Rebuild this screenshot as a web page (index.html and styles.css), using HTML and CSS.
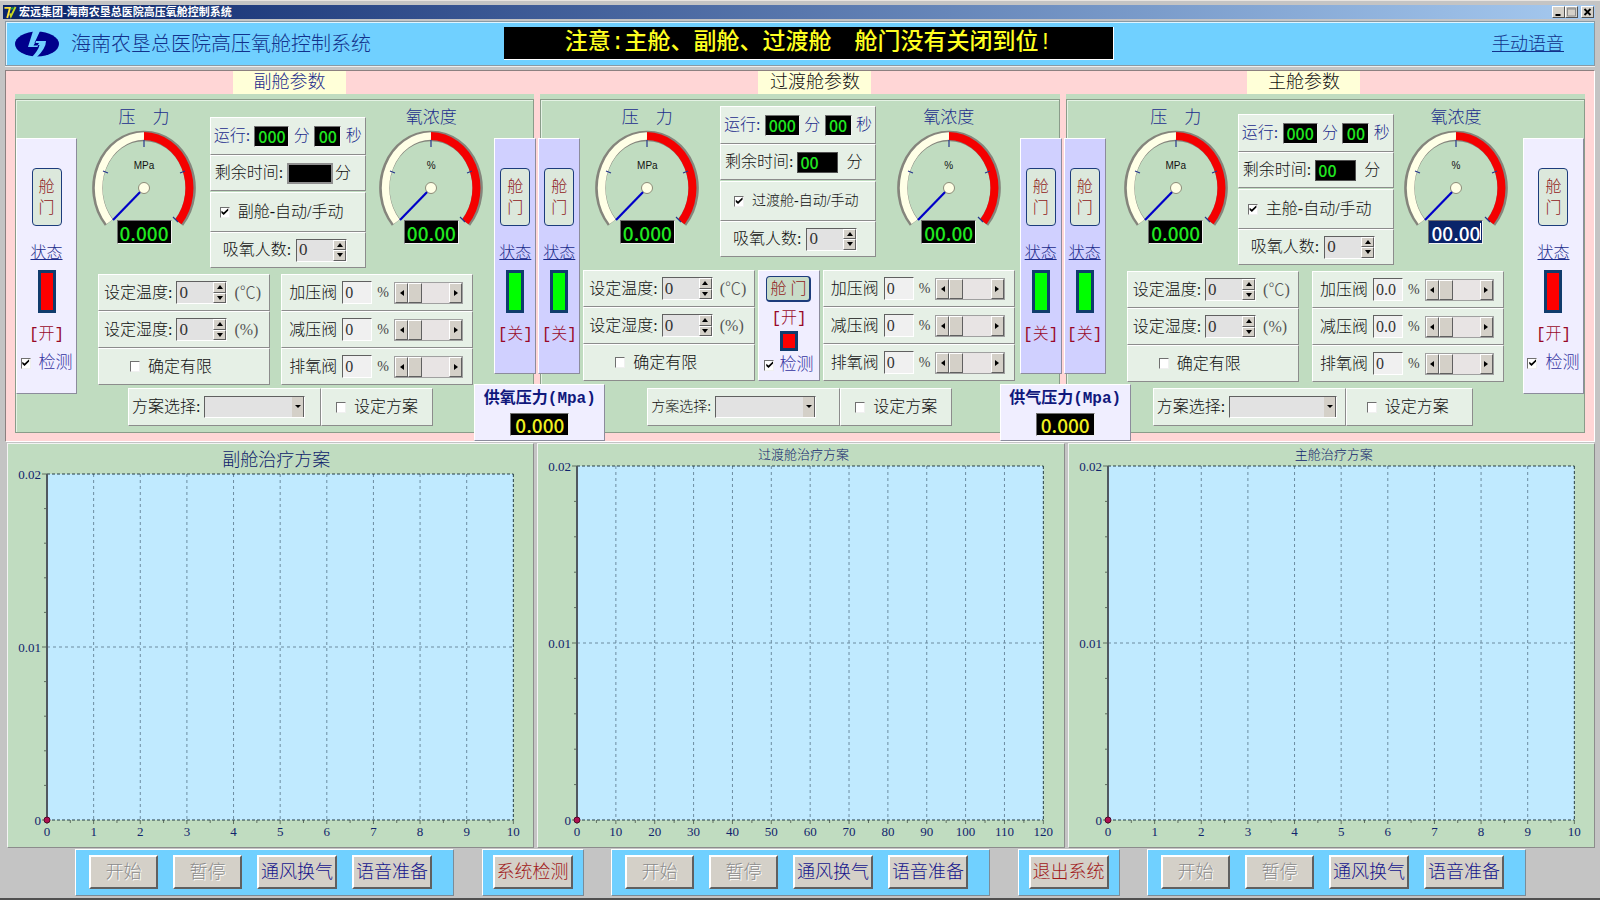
FILE: index.html
```html
<!DOCTYPE html>
<html lang="zh-CN">
<head>
    <meta charset="UTF-8">
    <title>宏远集团-海南农垦总医院高压氧舱控制系统</title>
    <link rel="stylesheet" href="styles.css">
</head>
<body>
    <!-- Shared gauge dial -->
    <svg class="defs" width="0" height="0" aria-hidden="true">
        <symbol id="dial" viewBox="0 0 104 100">
            <path d="M52 7 A46 52 0 0 0 17 93.5" fill="none" stroke="#85857c" stroke-width="10.5"/>
            <path d="M52 7 A46 52 0 0 1 87 93.5" fill="none" stroke="#85857c" stroke-width="10.5"/>
            <path d="M52 7 A46 52 0 0 0 17.6 92.8" fill="none" stroke="#ffffe6" stroke-width="7.5"/>
            <path d="M52 7 A46 52 0 0 1 86.4 92.8" fill="none" stroke="#f40000" stroke-width="8"/>
            <path d="M52 11 V18 M11 42 L16 44 M93 42 L88 44 M81 88 L86 93" stroke="#26368c" stroke-width="1.2"/>
            <path d="M52 59 L21 91" stroke="#0000c8" stroke-width="2.2"/>
            <ellipse cx="52" cy="59" rx="5.5" ry="5.5" fill="#ffffe6" stroke="#8c8c78"/>
        </symbol>
    </svg>

    <div class="titlebar">
        <svg class="app-icon" viewBox="0 0 14 14">
            <path d="M1 2 H7 L4 13" fill="none" stroke="#ffe23a" stroke-width="2"/>
            <path d="M7 8 L8 11 L13 1" fill="none" stroke="#c8d820" stroke-width="2"/>
            <path d="M8 3 L11 2" stroke="#20a040" stroke-width="2"/>
        </svg>
        <span class="titlebar-text">宏远集团-海南农垦总医院高压氧舱控制系统</span>
        <button class="win-btn" aria-label="最小化"><svg viewBox="0 0 10 10"><path d="M2 8 H7" stroke="#000" stroke-width="2"/></svg></button>
        <button class="win-btn" aria-label="最大化"><svg viewBox="0 0 10 10"><path d="M1 2 H9 M1 1 H9 V9 H1 Z" fill="none" stroke="#8c8c8c"/></svg></button>
        <button class="win-btn win-close" aria-label="关闭"><svg viewBox="0 0 10 10"><path d="M2 2 L8 8 M8 2 L2 8" stroke="#000" stroke-width="1.8"/></svg></button>
    </div>

    <header class="header">
        <svg class="logo" viewBox="0 0 44 26">
            <ellipse cx="22" cy="13" rx="22" ry="12.5" fill="#00008c"/>
            <path d="M18 0 H25 L19.500 12 H24 L22.500 16 H13 Z" fill="#70d0ff"/>
            <path d="M21 10 H31 Q31 17 22 26 H17 Q23.500 19 24.500 14 H20 Z" fill="#70d0ff"/>
            <path d="M20 12 H24 L22.500 14.500 H18.500 Z" fill="#00008c"/>
        </svg>
        <h1 class="header-title">海南农垦总医院高压氧舱控制系统</h1>
        <div class="banner">注意:主舱、副舱、过渡舱&emsp;舱门没有关闭到位!</div>
        <a class="voice-link" href="#">手动语音</a>
    </header>

    <section class="params">
        <!-- 副舱 -->
        <div class="chamber chamber-sub">
            <h2 class="tab tab-blue">副舱参数</h2>
            <div class="chamber-body">
                <div class="chamber-inner">
                    <div class="status status-open status-wide">
                        <button class="door-btn">舱<br>门</button>
                        <a class="state-link" href="#">状态</a>
                        <span class="lamp lamp-red"></span>
                        <span class="state-text">[开]</span>
                        <label class="check detect"><input type="checkbox" checked>检测</label>
                    </div>
                    <div class="main">
                        <div class="row-gauges">
                            <div class="gauge">
                                <label class="gauge-title" for="p1">压&emsp;力</label>
                                <div class="dial"><svg><use href="#dial"/></svg><span class="unit">MPa</span></div>
                                <input class="lcd lcd-gauge" id="p1" value="0.000" readonly>
                            </div>
                            <div class="run-box">
                                <div class="cell run-row">
                                    <span>运行:</span><input class="lcd lcd-min" aria-label="运行分" value="000" readonly><span>分</span><input class="lcd lcd-sec" aria-label="运行秒" value="00" readonly><span>秒</span>
                                </div>
                                <div class="cell left-row">
                                    <label for="l1">剩余时间:</label><input class="lcd lcd-left" id="l1" value="" readonly><span>分</span>
                                </div>
                                <div class="cell auto-row"><label class="check"><input type="checkbox" checked>副舱-自动/手动</label></div>
                                <div class="cell people-row">
                                    <label for="n1">吸氧人数:</label>
                                    <span class="spin"><input id="n1" type="text" value="0"><span class="spin-btns"><button class="up" aria-label="增加"></button><button class="down" aria-label="减少"></button></span></span>
                                </div>
                            </div>
                            <div class="gauge">
                                <label class="gauge-title" for="o1">氧浓度</label>
                                <div class="dial"><svg><use href="#dial"/></svg><span class="unit">%</span></div>
                                <input class="lcd lcd-gauge" id="o1" value="00.00" readonly>
                            </div>
                        </div>
                        <div class="row-settings">
                            <div class="settings">
                                <div class="cell"><label for="t1">设定温度:</label><span class="spin"><input id="t1" type="text" value="0"><span class="spin-btns"><button class="up" aria-label="增加"></button><button class="down" aria-label="减少"></button></span></span><span class="suffix">(℃)</span></div>
                                <div class="cell"><label for="h1">设定湿度:</label><span class="spin"><input id="h1" type="text" value="0"><span class="spin-btns"><button class="up" aria-label="增加"></button><button class="down" aria-label="减少"></button></span></span><span class="suffix">(%)</span></div>
                                <div class="cell confirm"><label class="check"><input type="checkbox">确定有限</label></div>
                            </div>
                            <div class="valves">
                                <div class="cell"><label for="v11">加压阀</label><input class="num" id="v11" type="text" value="0"><span class="percent">%</span><span class="scroll"><button class="prev" aria-label="减小"></button><input type="range" value="0" aria-label="加压阀开度"><button class="next" aria-label="增大"></button></span></div>
                                <div class="cell"><label for="v12">减压阀</label><input class="num" id="v12" type="text" value="0"><span class="percent">%</span><span class="scroll"><button class="prev" aria-label="减小"></button><input type="range" value="0" aria-label="减压阀开度"><button class="next" aria-label="增大"></button></span></div>
                                <div class="cell"><label for="v13">排氧阀</label><input class="num" id="v13" type="text" value="0"><span class="percent">%</span><span class="scroll"><button class="prev" aria-label="减小"></button><input type="range" value="0" aria-label="排氧阀开度"><button class="next" aria-label="增大"></button></span></div>
                            </div>
                        </div>
                        <div class="plan">
                            <div class="cell plan-pick"><label for="s1">方案选择:</label><select id="s1"><option></option></select></div>
                            <div class="cell plan-set"><label class="check"><input type="checkbox">设定方案</label></div>
                        </div>
                    </div>
                    <div class="status status-closed status-right">
                        <button class="door-btn">舱<br>门</button>
                        <a class="state-link" href="#">状态</a>
                        <span class="lamp lamp-green"></span>
                        <span class="state-text">[关]</span>
                    </div>
                </div>
                <div class="supply">
                    <label for="supplyO2">供氧压力(Mpa)</label>
                    <input class="lcd lcd-supply" id="supplyO2" value="0.000" readonly>
                </div>
            </div>
        </div>

        <!-- 过渡舱 -->
        <div class="chamber chamber-mid">
            <h2 class="tab">过渡舱参数</h2>
            <div class="chamber-body">
                <div class="chamber-inner">
                    <div class="status status-closed status-left">
                        <button class="door-btn">舱<br>门</button>
                        <a class="state-link" href="#">状态</a>
                        <span class="lamp lamp-green"></span>
                        <span class="state-text">[关]</span>
                    </div>
                    <div class="main">
                        <div class="row-gauges">
                            <div class="gauge">
                                <label class="gauge-title" for="p2">压&emsp;力</label>
                                <div class="dial"><svg><use href="#dial"/></svg><span class="unit">MPa</span></div>
                                <input class="lcd lcd-gauge" id="p2" value="0.000" readonly>
                            </div>
                            <div class="run-box">
                                <div class="cell run-row">
                                    <span>运行:</span><input class="lcd lcd-min" aria-label="运行分" value="000" readonly><span>分</span><input class="lcd lcd-sec" aria-label="运行秒" value="00" readonly><span>秒</span>
                                </div>
                                <div class="cell left-row">
                                    <label for="l2">剩余时间:</label><input class="lcd lcd-left lcd-lit" id="l2" value="00" readonly><span>分</span>
                                </div>
                                <div class="cell auto-row auto-small"><label class="check"><input type="checkbox" checked>过渡舱-自动/手动</label></div>
                                <div class="cell people-row">
                                    <label for="n2">吸氧人数:</label>
                                    <span class="spin"><input id="n2" type="text" value="0"><span class="spin-btns"><button class="up" aria-label="增加"></button><button class="down" aria-label="减少"></button></span></span>
                                </div>
                            </div>
                            <div class="gauge">
                                <label class="gauge-title" for="o2">氧浓度</label>
                                <div class="dial"><svg><use href="#dial"/></svg><span class="unit">%</span></div>
                                <input class="lcd lcd-gauge" id="o2" value="00.00" readonly>
                            </div>
                        </div>
                        <div class="row-settings">
                            <div class="settings">
                                <div class="cell"><label for="t2">设定温度:</label><span class="spin"><input id="t2" type="text" value="0"><span class="spin-btns"><button class="up" aria-label="增加"></button><button class="down" aria-label="减少"></button></span></span><span class="suffix">(℃)</span></div>
                                <div class="cell"><label for="h2">设定湿度:</label><span class="spin"><input id="h2" type="text" value="0"><span class="spin-btns"><button class="up" aria-label="增加"></button><button class="down" aria-label="减少"></button></span></span><span class="suffix">(%)</span></div>
                                <div class="cell confirm"><label class="check"><input type="checkbox">确定有限</label></div>
                            </div>
                            <div class="door-box">
                                <button class="door-btn door-wide">舱 门</button>
                                <span class="state-text">[开]</span>
                                <span class="lamp lamp-red lamp-small"></span>
                                <label class="check detect"><input type="checkbox" checked>检测</label>
                            </div>
                            <div class="valves">
                                <div class="cell"><label for="v21">加压阀</label><input class="num" id="v21" type="text" value="0"><span class="percent">%</span><span class="scroll"><button class="prev" aria-label="减小"></button><input type="range" value="0" aria-label="加压阀开度"><button class="next" aria-label="增大"></button></span></div>
                                <div class="cell"><label for="v22">减压阀</label><input class="num" id="v22" type="text" value="0"><span class="percent">%</span><span class="scroll"><button class="prev" aria-label="减小"></button><input type="range" value="0" aria-label="减压阀开度"><button class="next" aria-label="增大"></button></span></div>
                                <div class="cell"><label for="v23">排氧阀</label><input class="num" id="v23" type="text" value="0"><span class="percent">%</span><span class="scroll"><button class="prev" aria-label="减小"></button><input type="range" value="0" aria-label="排氧阀开度"><button class="next" aria-label="增大"></button></span></div>
                            </div>
                        </div>
                        <div class="plan">
                            <div class="cell plan-pick"><label for="s2">方案选择:</label><select id="s2"><option></option></select></div>
                            <div class="cell plan-set"><label class="check"><input type="checkbox">设定方案</label></div>
                        </div>
                    </div>
                    <div class="status status-closed status-right">
                        <button class="door-btn">舱<br>门</button>
                        <a class="state-link" href="#">状态</a>
                        <span class="lamp lamp-green"></span>
                        <span class="state-text">[关]</span>
                    </div>
                </div>
                <div class="supply">
                    <label for="supplyAir">供气压力(Mpa)</label>
                    <input class="lcd lcd-supply" id="supplyAir" value="0.000" readonly>
                </div>
            </div>
        </div>

        <!-- 主舱 -->
        <div class="chamber chamber-master">
            <h2 class="tab">主舱参数</h2>
            <div class="chamber-body">
                <div class="chamber-inner">
                    <div class="status status-closed status-left">
                        <button class="door-btn">舱<br>门</button>
                        <a class="state-link" href="#">状态</a>
                        <span class="lamp lamp-green"></span>
                        <span class="state-text">[关]</span>
                    </div>
                    <div class="main">
                        <div class="row-gauges">
                            <div class="gauge">
                                <label class="gauge-title" for="p3">压&emsp;力</label>
                                <div class="dial"><svg><use href="#dial"/></svg><span class="unit">MPa</span></div>
                                <input class="lcd lcd-gauge" id="p3" value="0.000" readonly>
                            </div>
                            <div class="run-box">
                                <div class="cell run-row">
                                    <span>运行:</span><input class="lcd lcd-min" aria-label="运行分" value="000" readonly><span>分</span><input class="lcd lcd-sec" aria-label="运行秒" value="00" readonly><span>秒</span>
                                </div>
                                <div class="cell left-row">
                                    <label for="l3">剩余时间:</label><input class="lcd lcd-left lcd-lit" id="l3" value="00" readonly><span>分</span>
                                </div>
                                <div class="cell auto-row"><label class="check"><input type="checkbox" checked>主舱-自动/手动</label></div>
                                <div class="cell people-row">
                                    <label for="n3">吸氧人数:</label>
                                    <span class="spin"><input id="n3" type="text" value="0"><span class="spin-btns"><button class="up" aria-label="增加"></button><button class="down" aria-label="减少"></button></span></span>
                                </div>
                            </div>
                            <div class="gauge">
                                <label class="gauge-title" for="o3">氧浓度</label>
                                <div class="dial"><svg><use href="#dial"/></svg><span class="unit">%</span></div>
                                <input class="lcd lcd-gauge lcd-selected" id="o3" value="00.00" readonly>
                            </div>
                        </div>
                        <div class="row-settings">
                            <div class="settings">
                                <div class="cell"><label for="t3">设定温度:</label><span class="spin"><input id="t3" type="text" value="0"><span class="spin-btns"><button class="up" aria-label="增加"></button><button class="down" aria-label="减少"></button></span></span><span class="suffix">(℃)</span></div>
                                <div class="cell"><label for="h3">设定湿度:</label><span class="spin"><input id="h3" type="text" value="0"><span class="spin-btns"><button class="up" aria-label="增加"></button><button class="down" aria-label="减少"></button></span></span><span class="suffix">(%)</span></div>
                                <div class="cell confirm"><label class="check"><input type="checkbox">确定有限</label></div>
                            </div>
                            <div class="valves">
                                <div class="cell"><label for="v31">加压阀</label><input class="num" id="v31" type="text" value="0.0"><span class="percent">%</span><span class="scroll"><button class="prev" aria-label="减小"></button><input type="range" value="0" aria-label="加压阀开度"><button class="next" aria-label="增大"></button></span></div>
                                <div class="cell"><label for="v32">减压阀</label><input class="num" id="v32" type="text" value="0.0"><span class="percent">%</span><span class="scroll"><button class="prev" aria-label="减小"></button><input type="range" value="0" aria-label="减压阀开度"><button class="next" aria-label="增大"></button></span></div>
                                <div class="cell"><label for="v33">排氧阀</label><input class="num" id="v33" type="text" value="0"><span class="percent">%</span><span class="scroll"><button class="prev" aria-label="减小"></button><input type="range" value="0" aria-label="排氧阀开度"><button class="next" aria-label="增大"></button></span></div>
                            </div>
                        </div>
                        <div class="plan">
                            <div class="cell plan-pick"><label for="s3">方案选择:</label><select id="s3"><option></option></select></div>
                            <div class="cell plan-set"><label class="check"><input type="checkbox">设定方案</label></div>
                        </div>
                    </div>
                    <div class="status status-open status-wide">
                        <button class="door-btn">舱<br>门</button>
                        <a class="state-link" href="#">状态</a>
                        <span class="lamp lamp-red"></span>
                        <span class="state-text">[开]</span>
                        <label class="check detect"><input type="checkbox" checked>检测</label>
                    </div>
                </div>
            </div>
        </div>
    </section>

    <!-- Treatment plan charts -->
    <section class="charts">
        <div class="chart chart-large">
            <h3 class="chart-title">副舱治疗方案</h3>
            <svg class="plot" data-max="10" data-step="1"></svg>
        </div>
        <div class="chart">
            <h3 class="chart-title">过渡舱治疗方案</h3>
            <svg class="plot" data-max="120" data-step="10"></svg>
        </div>
        <div class="chart">
            <h3 class="chart-title">主舱治疗方案</h3>
            <svg class="plot" data-max="10" data-step="1"></svg>
        </div>
    </section>

    <footer class="toolbar">
        <div class="group">
            <button class="btn" disabled>开始</button>
            <button class="btn" disabled>暂停</button>
            <button class="btn btn-wide">通风换气</button>
            <button class="btn btn-wide">语音准备</button>
        </div>
        <div class="group group-single"><button class="btn btn-wide btn-red">系统检测</button></div>
        <div class="group">
            <button class="btn" disabled>开始</button>
            <button class="btn" disabled>暂停</button>
            <button class="btn btn-wide">通风换气</button>
            <button class="btn btn-wide">语音准备</button>
        </div>
        <div class="group group-single"><button class="btn btn-wide btn-red">退出系统</button></div>
        <div class="group">
            <button class="btn" disabled>开始</button>
            <button class="btn" disabled>暂停</button>
            <button class="btn btn-wide">通风换气</button>
            <button class="btn btn-wide">语音准备</button>
        </div>
    </footer>

    <script src="script.js"></script>
</body>
</html>
```
FILE: script.js
```js
const NS = 'http://www.w3.org/2000/svg';

function add(svg, tag, attrs, text) {
    const el = document.createElementNS(NS, tag);
    for (const key in attrs) el.setAttribute(key, attrs[key]);
    if (text !== undefined) el.textContent = text;
    svg.appendChild(el);
}

// Draw the grid, ticks and axis labels of one plan chart
function drawPlot(svg) {
    const max = Number(svg.dataset.max);
    const step = Number(svg.dataset.step);
    const n = max / step;

    add(svg, 'rect', { class: 'plot-bg', width: '100%', height: '100%' });
    for (let i = 0; i <= n; i++) {
        const x = (i / n * 100) + '%';
        if (i > 0 && i < n) add(svg, 'line', { class: 'grid', x1: x, x2: x, y1: 0, y2: '100%' });

        const bottom = document.createElementNS(NS, 'svg');
        bottom.setAttribute('y', '100%');
        bottom.setAttribute('overflow', 'visible');
        add(bottom, 'line', { class: 'tick', x1: x, x2: x, y1: 0, y2: 4 });
        if (i < n) {
            const half = ((i + 0.5) / n * 100) + '%';
            add(bottom, 'line', { class: 'tick', x1: half, x2: half, y1: 0, y2: 3 });
        }
        add(bottom, 'text', { x: x, y: 16, 'text-anchor': 'middle' }, i * step);
        svg.appendChild(bottom);
    }
    for (let i = 0; i <= 10; i++) {
        const y = (i * 10) + '%';
        add(svg, 'line', { class: 'tick', x1: i % 5 ? -3 : -5, x2: 0, y1: y, y2: y });
    }
    add(svg, 'line', { class: 'grid', x1: 0, x2: '100%', y1: '50%', y2: '50%' });
    ['0.02', '0.01', '0'].forEach((label, i) => {
        add(svg, 'text', { x: -6, y: (i * 50) + '%', dy: 5, 'text-anchor': 'end' }, label);
    });
    add(svg, 'line', { class: 'edge', x1: 0, x2: '100%', y1: 0, y2: 0 });
    add(svg, 'line', { class: 'edge', x1: '100%', x2: '100%', y1: 0, y2: '100%' });
    add(svg, 'line', { class: 'edge', x1: 0, x2: '100%', y1: '100%', y2: '100%' });
    add(svg, 'line', { class: 'axis', x1: 0, x2: 0, y1: 0, y2: '100%' });
    add(svg, 'circle', { class: 'point', cx: 0, cy: '100%', r: 3 });
}

document.querySelectorAll('.plot').forEach(drawPlot);
```
FILE: styles.css
```css
* {
    box-sizing: border-box;
}
body {
    margin: 0;
    padding: 4px 5px 2px;
    min-height: 100vh;
    display: flex;
    flex-direction: column;
    background-color: #c4c4c4;
    border-top: 1px solid #e8e4e0;
    border-bottom: 2px solid #505050;
    font-family: "Liberation Serif", "Noto Sans CJK SC", sans-serif;
    font-size: 16px;
    font-weight: 300;
    line-height: 20px;
    color: #111;
}
h1, h2, h3 {
    margin: 0;
    font-weight: 300;
}
button, input, select {
    font-family: inherit;
    font-weight: inherit;
    margin: 0;
    padding: 0;
}
.defs {
    position: absolute;
}

/* Title bar */
.titlebar {
    display: flex;
    align-items: center;
    height: 14px;
    padding: 0 1px 0 0;
    margin-left: -2px;
    background: linear-gradient(to right, #0a246a, #a6caf0);
}
.app-icon {
    width: 14px;
    height: 13px;
    margin-right: 2px;
}
.titlebar-text {
    flex: 1;
    font-size: 11px;
    line-height: 14px;
    font-weight: bold;
    color: #fff;
}
.win-btn {
    width: 13px;
    height: 12px;
    display: flex;
    background-color: #d4d0c8;
    border: 1px solid;
    border-color: #fff #505050 #505050 #fff;
}
.win-btn svg {
    width: 11px;
    height: 10px;
}
.win-close {
    margin-left: 3px;
}

/* Header */
.header {
    display: flex;
    align-items: center;
    height: 45px;
    margin-top: 2px;
    padding: 0 30px 0 9px;
    background-color: #70d0ff;
    border: 1px solid #8a9aa4;
    box-shadow: inset 1px 1px #dff4ff, 0 1px #eee;
}
.logo {
    width: 44px;
    height: 26px;
    margin-right: 12px;
}
.header-title {
    font-size: 20px;
    line-height: 24px;
    color: #12328c;
}
.banner {
    width: 610px;
    height: 33px;
    margin: 0 auto 0 133px;
    background-color: #000;
    border-right: 1px solid #fff;
    border-bottom: 1px solid #fff;
    color: #ffff20;
    font-family: "Liberation Mono", "Noto Sans CJK SC", monospace;
    font-size: 23px;
    font-weight: 500;
    line-height: 32px;
    text-align: center;
    white-space: nowrap;
}
.voice-link {
    font-size: 18px;
    color: #12328c;
}

/* Chamber panels */
.params {
    display: grid;
    grid-template-columns: repeat(3, 1fr);
    gap: 6px;
    margin-top: 4px;
    padding: 0 9px 8px;
    background-color: #ffd6d6;
    border: 1px solid #8c8080;
    border-color: #8c8080 #fff #fff #8c8080;
}
.chamber {
    display: flex;
    flex-direction: column;
}
.tab {
    width: 113px;
    height: 23px;
    margin-left: 42%;
    background-color: #ffffd8;
    font-size: 18px;
    line-height: 22px;
    text-align: center;
}
.tab-blue {
    color: #1c2c8c;
}
.chamber-master .tab {
    margin-left: 35%;
}
.chamber-body {
    flex: 1;
    position: relative;
    display: flex;
    padding-top: 5px;
    background-color: #c0dcc0;
}
.chamber-inner {
    flex: 1;
    display: flex;
    min-height: 334px;
    border: 1px solid #8a9c8a;
    box-shadow: inset 1px 1px #e4f2e4;
}
.main {
    flex: 1;
    min-width: 0;
    display: flex;
    flex-direction: column;
    padding-bottom: 6px;
}

/* Door status columns */
.status {
    align-self: flex-start;
    display: flex;
    flex-direction: column;
    align-items: center;
    width: 42px;
    height: 236px;
    margin-top: 38px;
    padding-top: 29px;
    border: 1px solid;
    border-color: #fff #8c8c9c #8c8c9c #fff;
    z-index: 1;
}
.status-closed {
    background-color: #d0d0ff;
}
.status-open {
    background-color: #f0eeff;
}
.status-wide {
    width: 61px;
    height: 256px;
}
.status-left {
    margin-left: -3px;
}
.status-right {
    margin-right: -3px;
}
.door-btn {
    width: 30px;
    height: 58px;
    background-color: #dce8dc;
    border: 1px solid #1c3c7c;
    border-radius: 4px;
    color: #902020;
    font-size: 16px;
    line-height: 21px;
}
.door-wide {
    width: 45px;
    height: 26px;
    background-color: #c8dcc8;
    border-width: 1px 2px 2px 1px;
    white-space: nowrap;
}
.state-link {
    margin-top: 17px;
    color: #1c2c8c;
}
.lamp {
    width: 18px;
    height: 43px;
    margin-top: 7px;
    border: 3px solid #103c6c;
}
.lamp-red {
    background-color: #ff0000;
}
.lamp-green {
    background-color: #00ff00;
}
.lamp-small {
    height: 20px;
    margin-top: 2px;
}
.state-text {
    margin-top: 12px;
    font-family: "Liberation Mono", "Noto Sans CJK SC", monospace;
    color: #980828;
    white-space: nowrap;
}
.check {
    display: flex;
    align-items: center;
    gap: 8px;
    white-space: nowrap;
}
.check input {
    appearance: none;
    width: 10px;
    height: 11px;
    background-color: #fff;
    border: 1px solid;
    border-color: #707070 #f0f0f0 #f0f0f0 #707070;
}
.check input:checked::before {
    content: "";
    display: block;
    width: 8px;
    height: 8px;
    background-color: #000;
    clip-path: polygon(10% 40%, 38% 62%, 95% 8%, 95% 38%, 38% 95%, 10% 70%);
}
.detect {
    margin-top: 8px;
    font-size: 17px;
    color: #3434a0;
}

/* Gauges */
.row-gauges {
    display: flex;
    justify-content: space-between;
    align-items: flex-start;
}
.chamber-sub .row-gauges {
    padding: 0 11px 0 15px;
}
.chamber-mid .row-gauges {
    padding: 0 19px 0 15px;
}
.chamber-master .row-gauges {
    padding: 0 15px 0 18px;
}
.gauge {
    display: flex;
    flex-direction: column;
    align-items: center;
    padding-top: 7px;
}
.gauge-title {
    font-size: 17px;
    line-height: 22px;
    color: #1c2c8c;
}
.dial {
    display: grid;
    justify-items: center;
}
.dial svg {
    grid-area: 1 / 1;
    width: 104px;
    height: 100px;
}
.unit {
    grid-area: 1 / 1;
    padding-top: 27px;
    font-family: "Liberation Sans", sans-serif;
    font-size: 10px;
    font-weight: normal;
}
.lcd {
    background-color: #000;
    border: 1px solid #707070;
    border-color: #707070 #f0f0f0 #f0f0f0 #707070;
    color: #20e820;
    font-family: "Noto Sans CJK SC", sans-serif;
    font-size: 16px;
    font-weight: 500;
    text-align: center;
}
.lcd-gauge {
    width: 55px;
    height: 24px;
    margin-top: -9px;
    font-size: 19px;
    line-height: 20px;
    z-index: 1;
}
.lcd-selected {
    background: linear-gradient(#fff, #fff) 51px 2px / 1px 17px no-repeat #0a246a;
    color: #fff;
}

/* Sunken and raised cells */
.cell {
    display: flex;
    align-items: center;
    height: 37px;
    background-color: #e6f0e6;
    border: 1px solid;
    border-color: #fff #8c8c8c #8c8c8c #fff;
    white-space: nowrap;
}
.run-box {
    width: 156px;
}
.chamber-sub .run-box {
    margin-top: 17px;
}
.chamber-mid .run-box {
    margin-top: 6px;
}
.chamber-master .run-box {
    margin-top: 14px;
}
.run-row {
    justify-content: space-between;
    height: 38px;
    padding: 0 3px;
    color: #1c2c8c;
}
.lcd-min {
    width: 35px;
    height: 21px;
}
.lcd-sec {
    width: 27px;
    height: 21px;
}
.left-row {
    height: 36px;
    gap: 2px;
    padding-left: 4px;
}
.lcd-left {
    width: 46px;
    height: 21px;
    margin-left: 2px;
    border: 2px solid #909090;
}
.lcd-lit {
    width: 41px;
    margin-right: 6px;
    padding-left: 2px;
    border: 1px solid #505050;
    text-align: left;
}
.auto-row {
    height: 40px;
    margin-top: 1px;
    padding-left: 9px;
}
.auto-small {
    padding-left: 13px;
    font-size: 14px;
}
.people-row {
    padding-left: 12px;
    height: 36px;
    gap: 5px;
}

/* Number boxes */
.spin {
    display: flex;
    width: 51px;
    height: 23px;
    border: 1px solid;
    border-color: #606060 #fff #fff #606060;
    background-color: #e2e2e2;
}
.spin input {
    flex: 1;
    min-width: 0;
    padding-left: 2px;
    border: 0;
    background: none;
    font-size: 17px;
    color: #333;
}
.spin-btns {
    display: flex;
    flex-direction: column;
    width: 13px;
}
.spin-btns button, .scroll button {
    flex: 1;
    display: flex;
    align-items: center;
    justify-content: center;
    background-color: #d4d0c8;
    border: 1px solid;
    border-color: #fff #606060 #606060 #fff;
}
.up::before, .down::before, .prev::before, .next::before {
    content: "";
    border: 3px solid transparent;
}
.up::before {
    border-top: 0;
    border-bottom: 4px solid #000;
}
.down::before {
    border-bottom: 0;
    border-top: 4px solid #000;
}
.prev::before {
    border-left: 0;
    border-right: 4px solid #000;
}
.next::before {
    border-right: 0;
    border-left: 4px solid #000;
}

/* Settings */
.row-settings {
    display: flex;
    justify-content: space-between;
}
.chamber-sub .row-settings {
    padding: 0 21px;
    margin-top: 6px;
}
.chamber-mid .row-settings {
    padding: 0 5px 0 3px;
    margin-top: 13px;
}
.chamber-master .row-settings {
    padding: 0 19px 0 21px;
    margin-top: 6px;
}
.settings {
    width: 172px;
}
.settings .cell {
    padding-left: 5px;
}
.settings .spin {
    margin-left: 4px;
}
.suffix {
    margin-left: 7px;
    color: #555;
}
.settings .confirm {
    padding-left: 31px;
}
.valves {
    width: 192px;
}
.valves .cell {
    padding: 0 9px 0 7px;
    gap: 5px;
}
.num {
    width: 30px;
    height: 23px;
    padding-left: 2px;
    border: 1px solid;
    border-color: #606060 #fff #fff #606060;
    background-color: #f0f0f0;
    font-size: 16px;
    color: #333;
}
.percent {
    font-size: 14px;
    color: #444;
}
.scroll {
    flex: 1;
    min-width: 0;
    display: flex;
    height: 22px;
    border: 1px solid #a0a0a0;
}
.scroll button {
    flex: 0 0 13px;
}
.scroll input {
    appearance: none;
    flex: 1;
    min-width: 0;
    background-color: #e8e4e4;
}
.scroll input::-webkit-slider-thumb {
    appearance: none;
    width: 14px;
    height: 20px;
    background-color: #d4d0c8;
    border: 1px solid;
    border-color: #fff #606060 #606060 #fff;
}
.door-box {
    display: flex;
    flex-direction: column;
    align-items: center;
    width: 62px;
    padding-top: 5px;
    background-color: #f0eeff;
    border: 1px solid;
    border-color: #fff #8c8c9c #8c8c9c #fff;
}
.door-box .state-text {
    margin-top: 7px;
}
.door-box .detect {
    margin-top: 4px;
    gap: 5px;
}

/* Plan row */
.plan {
    display: flex;
    margin-top: auto;
}
.chamber-sub .plan {
    margin-left: 51px;
}
.chamber-mid .plan {
    margin-left: 67px;
}
.chamber-master .plan {
    margin-left: 47px;
}
.plan-pick {
    width: 193px;
    height: 38px;
    padding-left: 3px;
    gap: 4px;
}
.chamber-mid .plan-pick {
    font-size: 14px;
}
.plan-set {
    width: 112px;
    height: 38px;
    padding-left: 14px;
}
.chamber-master .plan-set {
    width: 127px;
    padding-left: 20px;
}
.plan select {
    appearance: none;
    width: 101px;
    height: 22px;
    border: 1px solid;
    border-color: #606060 #fff #fff #606060;
    border-radius: 0;
    background:
        linear-gradient(to bottom left, #000 49%, transparent 51%) 90px 8px / 3px 3px no-repeat,
        linear-gradient(to bottom right, #000 49%, transparent 51%) 93px 8px / 3px 3px no-repeat,
        linear-gradient(#606060, #606060) 98px 0 / 1px 20px no-repeat,
        linear-gradient(#d4d0c8, #d4d0c8) 87px 0 / 12px 20px no-repeat,
        #e2e2e2;
}
.chamber-master .plan select {
    width: 108px;
    background-position: 97px 8px, 100px 8px, 105px 0, 94px 0, 0 0;
}

/* Supply pressure box sits over the gap between two chambers */
.supply {
    position: absolute;
    right: -71px;
    bottom: -8px;
    z-index: 2;
    display: flex;
    flex-direction: column;
    align-items: center;
    width: 131px;
    height: 57px;
    padding-top: 4px;
    background-color: #f0eeff;
    border: 1px solid;
    border-color: #fff #8c8c9c #8c8c9c #fff;
    color: #10187c;
    font-family: "Liberation Mono", "Noto Sans CJK SC", monospace;
    font-size: 16px;
    font-weight: bold;
    white-space: nowrap;
}
.lcd-supply {
    width: 59px;
    height: 23px;
    margin-top: 4px;
    color: #f0f020;
    font-size: 19px;
    line-height: 20px;
}

/* Charts */
.charts {
    flex: 1;
    display: grid;
    grid-template-columns: repeat(3, 1fr);
    gap: 3px;
    margin: 1px 0 0 2px;
}
.chart {
    display: flex;
    flex-direction: column;
    padding: 2px 20px 27px 39px;
    background-color: #c0dcc0;
    border: 1px solid;
    border-color: #f4f4f4 #8c8c8c #8c8c8c #f4f4f4;
}
.chart-title {
    margin-bottom: 2px;
    padding-right: 14px;
    font-size: 13px;
    line-height: 18px;
    text-align: center;
    color: #10246c;
}
.chart-large .chart-title {
    margin: 4px 0;
    padding-right: 8px;
    font-size: 18px;
    line-height: 20px;
}
.plot {
    flex: 1;
    width: 100%;
    min-height: 200px;
    overflow: visible;
    font-size: 13px;
    fill: #10246c;
}
.plot-bg {
    fill: #c0eaff;
}
.grid {
    stroke: #6c8ca0;
    stroke-dasharray: 3 3;
}
.edge {
    stroke: #243c44;
    stroke-dasharray: 3 2;
}
.axis {
    stroke: #505860;
    stroke-width: 2;
}
.tick {
    stroke: #607060;
}
.point {
    fill: #b01050;
    stroke: #500828;
}

/* Bottom toolbar */
.toolbar {
    display: flex;
    justify-content: space-between;
    margin-top: 1px;
    padding: 0 69px 0 70px;
}
.group {
    display: flex;
    gap: 15px;
    width: 379px;
    height: 47px;
    padding: 5px 0 0 13px;
    background-color: #70d0ff;
    border: 1px solid;
    border-color: #fff #7c8c98 #7c8c98 #fff;
}
.group-single {
    width: 102px;
    padding-left: 10px;
}
.btn {
    width: 69px;
    height: 34px;
    background-color: #d4d0c8;
    border: 2px solid;
    border-color: #fff #606060 #606060 #fff;
    color: #14148c;
    font-size: 18px;
    line-height: 24px;
    white-space: nowrap;
}
.btn-wide {
    width: 80px;
}
.btn-red {
    color: #a01818;
}
.btn:disabled {
    color: #8c8c8c;
    text-shadow: 1px 1px #fff;
}
```
